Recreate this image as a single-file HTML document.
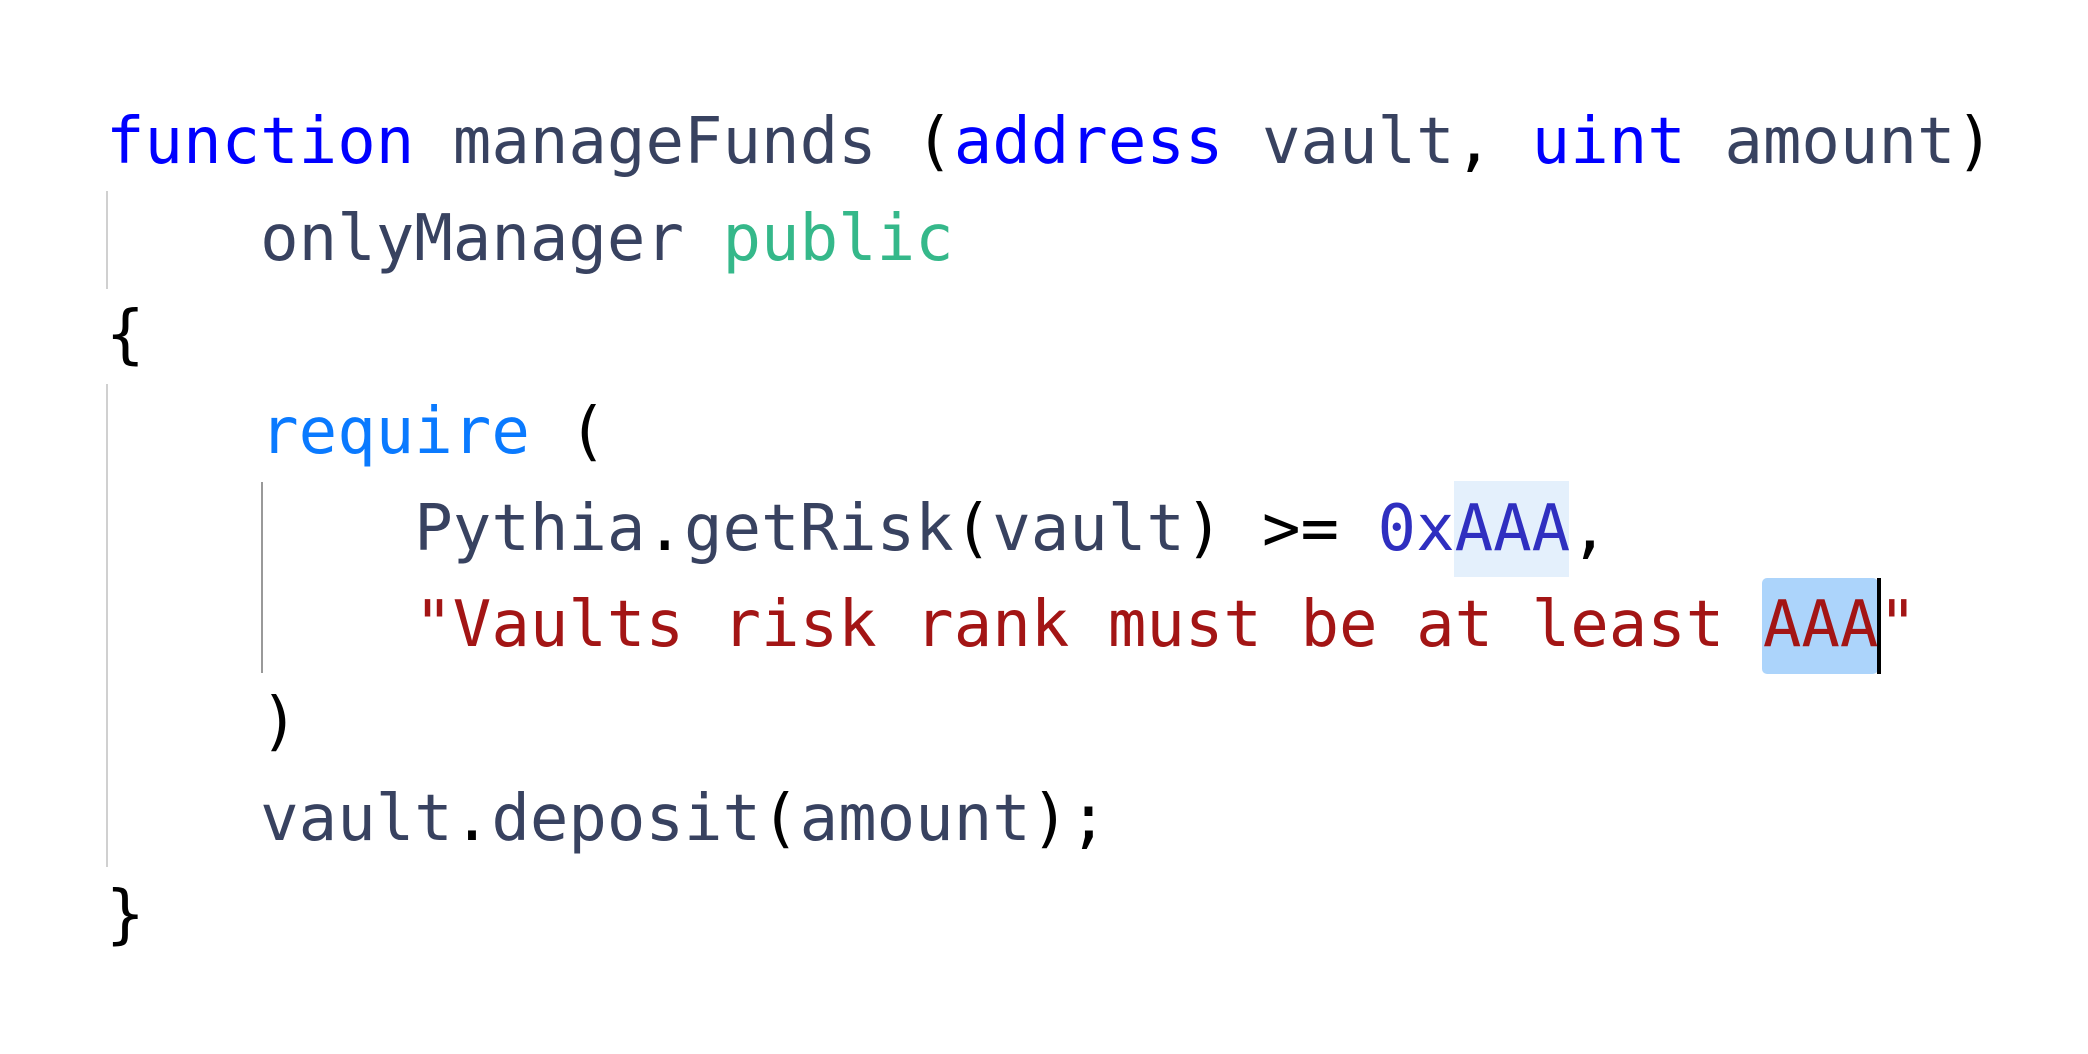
<!DOCTYPE html>
<html><head><meta charset="utf-8"><style>
html,body{margin:0;padding:0;background:#fff;width:2088px;height:1054px;overflow:hidden;position:relative}
.l{position:absolute;left:106px;height:96.7px;line-height:96.7px;font-family:"DejaVu Sans Mono","Liberation Mono",monospace;font-size:64px;white-space:pre;color:#000}
.i{color:#384260}.k{color:#0000ff}.g{color:#35b88a}.r{color:#0a7aff}.s{color:#a31515}.n{color:#2f2fc0}
.box{position:absolute}
</style></head><body>
<div class="box" style="left:106px;top:191px;width:2px;height:98px;background:#d0d0d0"></div>
<div class="box" style="left:106px;top:384px;width:2px;height:483px;background:#d0d0d0"></div>
<div class="box" style="left:261px;top:482px;width:2px;height:191px;background:#999"></div>
<div class="box" style="left:1454px;top:481px;width:115px;height:96px;background:#e4f0fc"></div>
<div class="box" style="left:1762px;top:578px;width:116px;height:96px;background:#acd4fb;border-radius:5px"></div>
<div class="box" style="left:1877px;top:578px;width:4px;height:96px;background:#000"></div>
<div class="l" style="top:94px"><span class="k">function</span> <span class="i">manageFunds</span> (<span class="k">address</span> <span class="i">vault</span>, <span class="k">uint</span> <span class="i">amount</span>)</div>
<div class="l" style="top:191px">    <span class="i">onlyManager</span> <span class="g">public</span></div>
<div class="l" style="top:287px">{</div>
<div class="l" style="top:384px">    <span class="r">require</span> (</div>
<div class="l" style="top:481px">        <span class="i">Pythia</span>.<span class="i">getRisk</span>(<span class="i">vault</span>) &gt;= <span class="n">0xAAA</span>,</div>
<div class="l" style="top:577px">        <span class="s">"Vaults risk rank must be at least AAA"</span></div>
<div class="l" style="top:674px">    )</div>
<div class="l" style="top:771px">    <span class="i">vault</span>.<span class="i">deposit</span>(<span class="i">amount</span>);</div>
<div class="l" style="top:867px">}</div>
</body></html>
